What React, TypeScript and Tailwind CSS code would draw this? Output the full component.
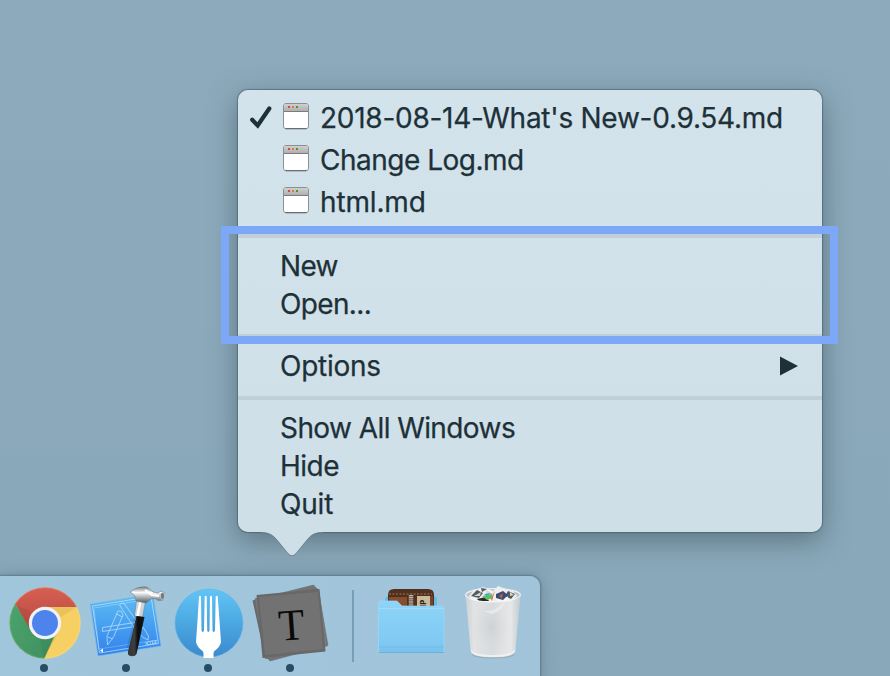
import type { ReactNode } from 'react';

function WindowIcon() {
  return (
    <svg className="mr-[10px] mb-[4px] h-[28px] w-[28px] shrink-0" viewBox="0 0 28 28">
      <defs>
        <linearGradient id="bar" x2="0" y2="1">
          <stop stopColor="#cfcfcf" />
          <stop offset="1" stopColor="#b0b0b0" />
        </linearGradient>
      </defs>
      <rect x="1.5" y="1.5" width="25" height="25.2" rx="2.5" fill="#fff" stroke="#899196" strokeWidth="1" />
      <path d="M2 9V4.300Q2 2 4.300 2h19.400Q26 2 26 4.300V9z" fill="url(#bar)" />
      <path d="M2 9.500h24" stroke="#7b7b7b" strokeWidth="1" />
      <path d="M3.500 26.700h21" stroke="#5b6367" strokeWidth="1" />
      <path d="M6 4h2v2H6z" fill="#e04343" />
      <path d="M10 4h2v2h-2z" fill="#d78325" />
      <path d="M14 4h2v2h-2z" fill="#4e932e" />
    </svg>
  );
}

function FileRow({ checked, children }: { checked?: boolean; children: ReactNode }) {
  return (
    <div className="flex h-[42px] items-center pl-[11px]">
      <div className="flex w-[33px] shrink-0">
        {checked && (
          <svg className="h-[26px] w-[25px]" viewBox="0 0 25 26">
            <path d="M3.200 14.800 8.700 20.400 20.300 3.500" fill="none" stroke="#1e3038" strokeWidth="4.200" strokeLinecap="round" strokeLinejoin="miter" />
          </svg>
        )}
      </div>
      <WindowIcon />
      <span>{children}</span>
    </div>
  );
}

function Row({ children }: { children: ReactNode }) {
  return <div className="flex h-[38px] items-center pr-[24px] pl-[42px]">{children}</div>;
}

function Separator() {
  return <div className="mt-[11px] mb-[9px] h-[4px] bg-[#bfd0d8]" />;
}

function Menu() {
  return (
    <div className="relative ml-[238px] h-[442px] w-[584px] rounded-[10px] bg-linear-to-b from-[#d2e3eb] to-[#cedfe8] pt-[7px] text-[28px] leading-none whitespace-nowrap text-[#1e3038] shadow-[0_0_1px_1px_rgba(45,65,75,0.4),0_8px_28px_rgba(45,65,70,0.5)] [-webkit-text-stroke:0.25px_#1e3038]">
      <FileRow checked><span className="tracking-[-0.26px]">2018-08-14-What's New-0.9.54.md</span></FileRow>
      <FileRow><span className="tracking-[-0.5px]">Change Log.md</span></FileRow>
      <FileRow><span className="tracking-[-0.15px]">html.md</span></FileRow>
      <Separator />
      <Row><span className="tracking-[-0.7px]">New</span></Row>
      <Row><span className="tracking-[-0.65px]">Open...</span></Row>
      <Separator />
      <Row>
        <span className="tracking-[-0.25px]">Options</span>
        <svg className="ml-auto h-[20px] w-[18px]" viewBox="0 0 18 20"><path d="M0 .500 18 10 0 19.500z" fill="#1e3038" /></svg>
      </Row>
      <Separator />
      <Row><span className="tracking-[-0.58px]">Show All Windows</span></Row>
      <Row><span className="tracking-[-0.5px]">Hide</span></Row>
      <Row><span className="tracking-[-0.2px]">Quit</span></Row>
      <svg className="absolute top-[441px] left-[22px] h-[30px] w-[64px] overflow-visible" viewBox="0 0 64 30">
        <path d="M0 0V1.2C9 1.2 13 4 17 9L28 22.5Q32 27 36 22.5L47 9C51 4 54 1.2 64 1.2V0z" fill="#cedfe8" />
        <path d="M0 1.5C9 1.5 13 4 17 9L28 22.5Q32 27 36 22.5L47 9C51 4 54 1.5 64 1.5" fill="none" stroke="#536b77" strokeOpacity=".65" strokeWidth="1" />
      </svg>
      <div className="absolute top-[136px] left-[-17px] h-[118px] w-[617px] border-8 border-[#7da8f8]" />
    </div>
  );
}

function ChromeIcon() {
  return (
    <svg className="ml-[2px] h-[72px] w-[72px]" viewBox="0 0 72 72">
      <defs>
        <clipPath id="disc"><circle cx="36" cy="36" r="35.7" /></clipPath>
        <linearGradient id="cr" x2="0" y2="1"><stop stopColor="#d65f52" /><stop offset="1" stopColor="#b94b40" /></linearGradient>
        <linearGradient id="cg" x2="1" y2="1"><stop stopColor="#4ca56c" /><stop offset="1" stopColor="#3f9060" /></linearGradient>
      </defs>
      <g clipPath="url(#disc)">
        <rect width="72" height="72" fill="#f7d063" />
        <path d="M36 20H72V0H0V18H7L20 41z" fill="url(#cr)" />
        <path d="M0 8 7 18 20.5 41Q25 52 37 52L45 50 35 72H0z" fill="url(#cg)" />
        <path d="M36 20h32L52 30z" fill="#a87b35" opacity=".16" />
        <path d="m7 18 13 24 1-18z" fill="#843c37" opacity=".18" />
        <path d="m51 42-16 30-4-20z" fill="#24704a" opacity=".16" />
      </g>
      <circle cx="36" cy="36" r="35.2" fill="none" stroke="#fff" strokeOpacity=".15" />
      <circle cx="36" cy="36" r="16.2" fill="#f0f2f5" />
      <circle cx="36" cy="36" r="13" fill="#4d83ec" />
    </svg>
  );
}

function XcodeIcon() {
  return (
    <svg className="h-[76px] w-[80px]" viewBox="86 585 80 76">
      <defs>
        <linearGradient id="xc" x2="0" y2="1"><stop stopColor="#5ebef4" /><stop offset="1" stopColor="#3181ec" /></linearGradient>
        <linearGradient id="steel" x2="0" y2="1"><stop stopColor="#777d82" /><stop offset=".35" stopColor="#fafafa" /><stop offset=".65" stopColor="#a8b0b5" /><stop offset="1" stopColor="#555b60" /></linearGradient>
        <linearGradient id="handle"><stop stopColor="#343638" /><stop offset=".4" stopColor="#3c3d3e" /><stop offset=".6" stopColor="#0b0c0c" /><stop offset="1" stopColor="#17191a" /></linearGradient>
      </defs>
      <path d="m90 604 63-10 8 52-63 10z" fill="url(#xc)" stroke="#7cbdea" strokeWidth=".7" />
      <g fill="none" stroke="#c8e9ff" strokeWidth=".8" opacity=".85">
        <path d="m92.500 606 58.500-9.500 7.500 47-59 9.500z" />
        <path d="m94 608 56-9" opacity=".6" />
        <path d="m94 609 5 40 59-9" opacity=".45" />
        <path d="m118 611 3 0 2 4-9.500 22-6 8-.500-9zM108 637l5 2M116.500 614l6 3" />
        <path d="M119.500 605q2-3.500 5-1l18 25-5 4z" />
        <path d="M102.500 627.500v4l39-6v-4z" />
        <path d="m138 629 5-2 5.500 9-.500 4q-6-2-9-7z" />
      </g>
      <text x="145" y="645.500" fontSize="5" fontFamily="Inter, sans-serif" fill="#b9e1ff" transform="rotate(-9 145 645.500)" textLength="13">XCODE</text>
      <path d="m100 650.500 3-2v4z" fill="#fff" />
      <path d="m139 613-9 36" stroke="#153a69" strokeWidth="7" opacity=".18" />
      <path d="m137 597 9 2-3.500 18-8-1z" fill="#ccd4d8" stroke="#677883" strokeWidth=".5" />
      <path d="m141 599-3.500 17" stroke="#fff" strokeWidth="2.500" />
      <path d="m136.500 616 8 1-8 37q-2 3.500-7.500 1.500-1.500-1-1-4z" fill="url(#handle)" />
      <path d="M130 592q7-6 17-5l6 5 5 1 3-2 4 2-2 7-5 .5-3-2-4 .5-5 4-10-2q0-6-6-9z" fill="url(#steel)" stroke="#6c7880" strokeWidth=".6" />
      <path d="m145 590 7 5 7 1" stroke="#fff" strokeWidth="2" fill="none" />
      <ellipse cx="162.500" cy="596" rx="2.200" ry="3.500" fill="#717981" stroke="#d6dadd" strokeWidth=".7" />
    </svg>
  );
}

function ForkIcon() {
  return (
    <svg className="ml-[2px] h-[70px] w-[70px]" viewBox="0 0 70 70">
      <defs>
        <linearGradient id="fork" x2="0" y2="1"><stop stopColor="#61c5f6" /><stop offset=".55" stopColor="#49a4df" /><stop offset="1" stopColor="#3b8acc" /></linearGradient>
      </defs>
      <circle cx="35" cy="35" r="34" fill="url(#fork)" stroke="#63b4e6" strokeWidth=".6" />
      <path d="M25 8.500q1-1.500 2 0l.5 34q1.200 3 2.500 0l.7-34q1-1.500 2 0l.5 34q1 3 2.300 0l.5-34q1-1.500 2 0l.5 34q1.200 3 2.500 0l.7-34q1-1.500 2 0l1.800 24 1.500 21.500q-1 5-6 8.500-1.500 1-1.500 3v9q-5 1.200-10 0v-9q0-2-1.500-3-5-3.500-6-8.500l1.500-21.500z" fill="#fff" />
    </svg>
  );
}

function TyporaIcon() {
  return (
    <svg className="h-[80px] w-[80px]" viewBox="250 583 80 80">
      <path d="m254 600 59.500-15 5 5.500 9.500 55-58 15.500-5.500-6z" fill="#737373" stroke="#626b70" strokeWidth=".5" />
      <path d="m252.500 600.500 65-12 9 57.500-61 13z" fill="#696969" />
      <path d="m255 598 64-8 8 56-62 13z" fill="#787878" />
      <path d="m256.500 595 63-6 6 62.500-63 6.500z" fill="#686868" />
      <path d="m259 597 59-5 5 57-58 6z" fill="#727272" />
      <text x="291.500" y="639.800" textAnchor="middle" fontFamily="'Liberation Serif', serif" fontSize="44.500" fill="#090909" transform="rotate(-4 291 625)" textLength="26" lengthAdjust="spacingAndGlyphs">T</text>
    </svg>
  );
}

function FolderIcon() {
  return (
    <svg className="h-[72px] w-[70px]" viewBox="376 587 70 72">
      <defs>
        <linearGradient id="folder" x2="0" y2="1"><stop stopColor="#8fd4f8" /><stop offset=".8" stopColor="#7fc9f3" /><stop offset="1" stopColor="#78c1ed" /></linearGradient>
      </defs>
      <path d="M385 599q0-3 4-3h44q4 0 4 3v12h-52z" fill="#66bce9" />
      <path d="M388 608v-13q0-6 6-6h34q6 0 6 6v13z" fill="#51301f" />
      <path d="M389 608v-11h18v11z" fill="#874d2c" />
      <path d="M389 594h43" stroke="#b48c67" strokeWidth=".8" strokeDasharray="2 1.500" />
      <path d="M411 595v13" stroke="#b5b0a8" strokeWidth="4.500" strokeDasharray="1.400 .7" />
      <path d="M417 596h13v11h-13z" fill="#cbb99e" />
      <path d="M430 596h3v12h-3z" fill="#744528" />
      <text x="0" y="0" transform="translate(426 607) rotate(-90)" fontFamily="Inter, sans-serif" fontSize="7.500" fontWeight="800" fill="#342318">IP</text>
      <path d="M378.500 604q0-3 3-3h15.500l5 5h39q3 0 3 3v41q0 2.500-2.500 2.500h-61q-2 0-2-2.500z" fill="url(#folder)" stroke="#9adafa" strokeWidth=".7" />
      <path d="M379 608.500h65" stroke="#a8e0fb" strokeWidth="1" opacity=".7" />
      <path d="M379 647h65" stroke="#64b6e1" strokeWidth=".7" opacity=".6" />
      <path d="M379 652.500h65" stroke="#60a9cf" strokeWidth=".8" />
    </svg>
  );
}

function TrashIcon() {
  return (
    <svg className="h-[76px] w-[60px]" viewBox="463 585 60 76">
      <defs>
        <linearGradient id="can"><stop stopColor="#cbd1d5" /><stop offset=".15" stopColor="#e1e3e4" /><stop offset=".5" stopColor="#d8dbdd" /><stop offset=".82" stopColor="#e7e7e8" /><stop offset="1" stopColor="#c1cbd0" /></linearGradient>
        <radialGradient id="soft"><stop stopColor="#b9bec1" stopOpacity=".3" /><stop offset="1" stopColor="#ccd0d2" stopOpacity="0" /></radialGradient>
      </defs>
      <ellipse cx="493" cy="595" rx="27.500" ry="6.500" fill="#bac5cb" stroke="#edf1f2" strokeWidth="1.200" />
      <path d="m469 596 5-6 9-3 6 2 4 2 5-5 8 3 7 2 4 5-8 7h-35z" fill="#eee" />
      <path d="m471 596 6-6 6 3-4 5zM481 588l6 1-5 3zM508 591l7 3-4 5-6-3z" fill="#555a5b" />
      <path d="m474 596 7-4-1 4zM486 590l7 4-5 5zM510 592l4 3-4 1z" fill="#d2d6d6" />
      <path d="m477 599 9-2 3 4h-10z" fill="#29282b" />
      <path d="m482 596 10-2 1 4-6 2z" fill="#64bd63" />
      <path d="m484 594 7-1-4 3z" fill="#38a5c9" />
      <path d="m491 599 4-9-3 11z" fill="#eb663e" />
      <path d="m496 594 7-3 5 4-5 5-7-2z" fill="#394b79" />
      <path d="m499 596 4-3-1 6z" fill="#c05d38" />
      <path d="m496 599 7 2 5-5-1 5h-9zM472 597l5 3h-6z" fill="#f8f8f8" />
      <path d="M465.500 595q5 7.500 27.500 7t27.500-7l-5 54q-.7 8.500-22.500 8.500t-22.500-8.500z" fill="url(#can)" />
      <ellipse cx="491" cy="627" rx="19" ry="23" fill="url(#soft)" />
      <path d="m484 611q11 1 21-9-3 9-13 12z" fill="#f1f2f2" opacity=".6" />
      <path d="M466 596q6 6 27 6t27-6" fill="none" stroke="#f5f8f9" strokeWidth=".9" />
      <path d="M470.500 648q1 7 22.500 7t22.500-7l-.5 4q-4 5-22 5t-22-5z" fill="#f2f3f3" opacity=".85" />
      <path d="M472 655q5 3 21 3t21-3" fill="none" stroke="#9aabb3" strokeWidth="1" />
    </svg>
  );
}

function DockItem({ running, children }: { running?: boolean; children: ReactNode }) {
  return (
    <div className="flex h-[100px] w-[82px] shrink-0 flex-col items-center">
      <div className="flex h-[88px] items-center pt-[6px]">{children}</div>
      {running && <div className="h-[8px] w-[8px] rounded-full bg-[#254e64]" />}
    </div>
  );
}

export default function App() {
  return (
    <main className="h-[676px] w-[890px] overflow-hidden bg-linear-to-b from-[#8daabc] to-[#89a8ba] pt-[90px] font-['Inter','Liberation_Sans',sans-serif]">
      <Menu />
      <div className="mt-[44px] flex h-[110px] w-[540px] rounded-tr-[10px] bg-linear-to-r from-[#a0c6dc] to-[#a2c4da] pl-[3px] shadow-[0_0_2px_1px_rgba(60,85,100,0.45),0_0_16px_rgba(50,75,90,0.35)]">
        <DockItem running><ChromeIcon /></DockItem>
        <DockItem running><XcodeIcon /></DockItem>
        <DockItem running><ForkIcon /></DockItem>
        <DockItem running><TyporaIcon /></DockItem>
        <div className="mt-[14px] mr-[16px] ml-[21px] h-[72px] w-[2px] bg-[#779fb5]" />
        <DockItem><FolderIcon /></DockItem>
        <DockItem><TrashIcon /></DockItem>
      </div>
    </main>
  );
}
